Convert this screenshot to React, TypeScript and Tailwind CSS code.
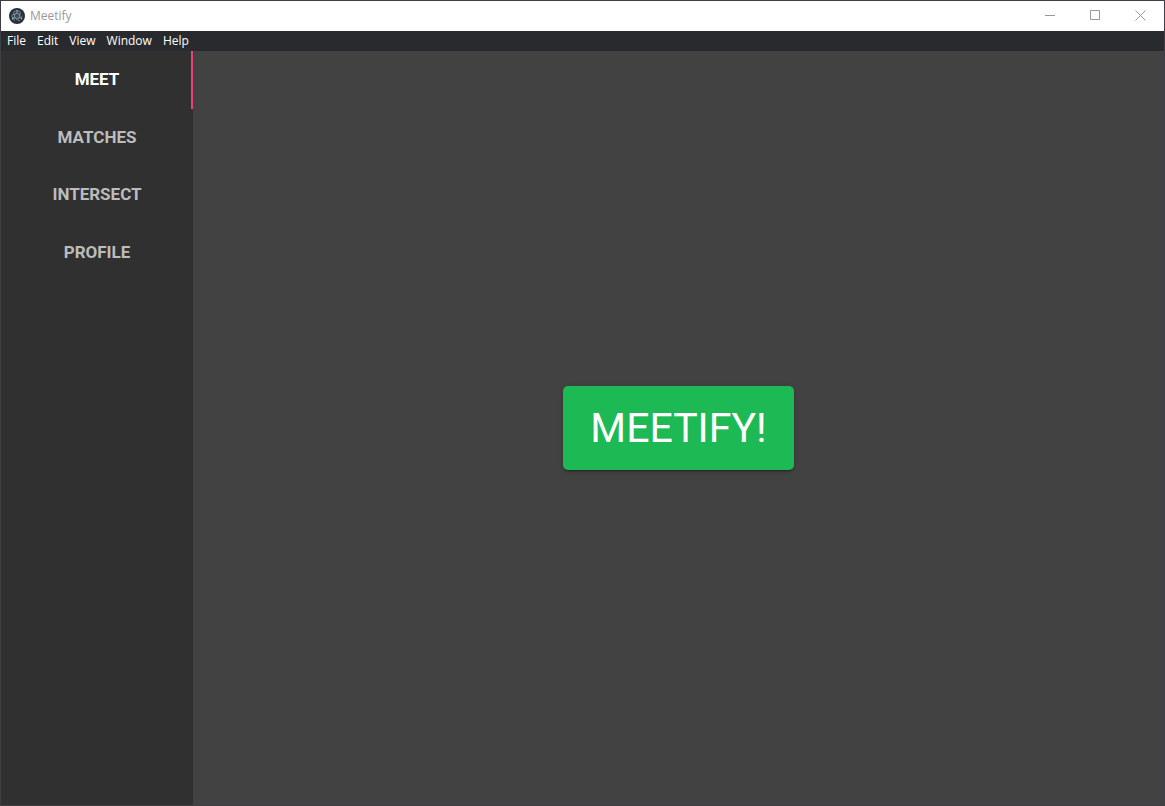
const menus = ["File", "Edit", "View", "Window", "Help"];
const tabs = ["Meet", "Matches", "Intersect", "Profile"];

function AppLogo() {
  return (
    <svg className="size-4" viewBox="0 0 16 16" fill="none" aria-hidden="true">
      <circle cx="8" cy="8" r="8" fill="#2b2e3a" />
      <g stroke="#a2d3dc" strokeOpacity="0.85" strokeWidth="0.6" strokeLinecap="round">
        <ellipse cx="8" cy="8" rx="5.4" ry="2.3" strokeDasharray="21 4" />
        <ellipse cx="8" cy="8" rx="5.4" ry="2.3" strokeDasharray="21 4" transform="rotate(60 8 8)" />
        <ellipse cx="8" cy="8" rx="5.4" ry="2.3" strokeDasharray="21 4" transform="rotate(120 8 8)" />
      </g>
      <g fill="#a2d3dc">
        <circle cx="8" cy="8" r="0.6" />
        <circle cx="3.6" cy="10.6" r="0.8" />
        <circle cx="12.4" cy="10.6" r="0.8" />
        <circle cx="8" cy="2.8" r="0.8" />
      </g>
    </svg>
  );
}

function TitleBar() {
  return (
    <header className="flex h-[30px] shrink-0 items-center justify-between bg-white">
      <div className="flex items-center gap-[5px] pl-2">
        <AppLogo />
        <span className="text-xs text-[#999999]">Meetify</span>
      </div>
      <div className="flex h-7 self-start text-[#999999]">
        <button type="button" aria-label="Minimize" className="flex w-[45px] items-center justify-center">
          <svg className="size-[11px]" viewBox="0 0 11 11" stroke="currentColor" fill="none">
            <path d="M0 5.5H10" />
          </svg>
        </button>
        <button type="button" aria-label="Maximize" className="flex w-[45px] items-center justify-center">
          <svg className="size-[11px]" viewBox="0 0 11 11" stroke="currentColor" fill="none">
            <path d="M0.5 0.5H9.5V9.5H0.5Z" />
          </svg>
        </button>
        <button type="button" aria-label="Close" className="flex w-[46px] items-center justify-center">
          <svg className="size-3" viewBox="0 0 12 12" stroke="currentColor" fill="none">
            <path d="M0.5 1.5L10.5 11.5M10.5 1.5L0.5 11.5" />
          </svg>
        </button>
      </div>
    </header>
  );
}

export default function App() {
  return (
    <div className="flex min-h-screen flex-col border border-[#3f3e45] bg-[#424242] font-['Open_Sans',sans-serif]">
      <TitleBar />
      <nav
        aria-label="Application menu"
        className="flex h-5 shrink-0 items-center gap-[11px] bg-[#292a2d] px-1.5 text-xs text-white"
      >
        {menus.map((menu) => (
          <button key={menu} type="button">
            {menu}
          </button>
        ))}
      </nav>
      <div className="flex grow font-[Roboto,sans-serif] text-white">
        <nav aria-label="Sections" className="w-48 shrink-0 bg-[#303030]">
          <div className="grid h-[230px] grid-rows-4">
            {tabs.map((tab, index) => (
              <button
                key={tab}
                type="button"
                aria-current={index === 0 ? "page" : undefined}
                className={
                  index === 0
                    ? "border-r-2 border-[#ec407a] pl-0.5 text-[17px] font-bold uppercase"
                    : "text-[17px] font-bold uppercase text-[#bcbcbc]"
                }
              >
                {tab}
              </button>
            ))}
          </div>
        </nav>
        <main className="flex grow items-center justify-center">
          <button
            type="button"
            className="rounded-[5px] bg-[#1db954] px-[27px] py-1.5 text-[41px] leading-[72px] uppercase shadow-[0_3px_1px_-2px_rgba(0,0,0,0.2),0_2px_2px_0_rgba(0,0,0,0.14),0_1px_5px_0_rgba(0,0,0,0.12)]"
          >
            Meetify!
          </button>
        </main>
      </div>
    </div>
  );
}
